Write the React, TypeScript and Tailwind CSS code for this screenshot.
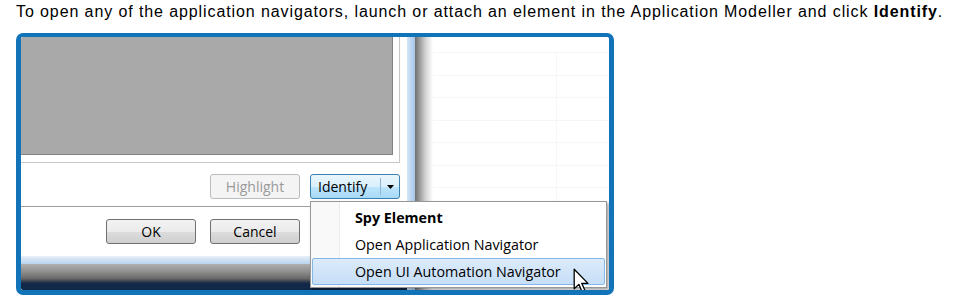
import React from "react";

const ui = { fontFamily: '"Open Sans", "Noto Sans", sans-serif' };

function Cursor() {
  return (
    <svg width="20" height="26" viewBox="0 0 14 20" className="absolute left-[551px] top-[231px] z-20">
      <path d="M1 1 L1 16 L4.6 12.6 L7.2 18.6 L9.4 17.6 L6.8 11.8 L11.6 11.8 Z" fill="#ffffff" stroke="#000000" strokeWidth="1" strokeLinejoin="round" />
    </svg>
  );
}

export default function App() {
  const rows = Array.from({ length: 11 });
  return (
    <div className="w-[956px] h-[295px] bg-white overflow-hidden">
      <p
        className="pl-[16px] pt-[3px] text-[16px] leading-[18px] tracking-[0.9px] text-black whitespace-nowrap"
        style={{ fontFamily: '"Liberation Sans", Arial, sans-serif' }}
      >
        To open any of the application navigators, launch or attach an element in the Application Modeller and click <b>Identify</b>.
      </p>
      <div className="ml-[16px] mt-[12px] w-[598px] h-[262px] border-[5px] border-t-[4px] border-[#1174b9] rounded-[7px] overflow-hidden">
        <div className="relative flex h-full w-full bg-white" style={ui}>
          {/* Dialog */}
          <div className="w-[386px] h-full flex flex-col bg-white">
            <div className="w-[379px] h-[126px] border-r border-b border-[#c6c6c6]">
              <div className="w-[372px] h-[118px] bg-[#a9a9a9] border-r border-b border-[#838383]" />
            </div>
            <div className="h-[43px] flex pl-[189px] pt-[11px] gap-[10px]">
              <div className="w-[90px] h-[25px] rounded-[3px] border border-[#b9bcbe] bg-[#f4f4f4] flex items-center justify-center text-[14px] text-[#9a9a9a]">
                Highlight
              </div>
              <div className="w-[90px] h-[25px] rounded-[3px] border border-[#3c7fb1] bg-[linear-gradient(#eaf6fd_0%,#d9f0fc_50%,#bee6fd_50%,#a7d9f5_100%)] flex items-center text-[14px] text-black">
                <span className="pl-[7px] w-[69px]">Identify</span>
                <span className="w-px h-[17px] bg-[#8fb3d0]" />
                <svg width="7" height="4" viewBox="0 0 7 4" className="ml-[6px]">
                  <path d="M0 0 L7 0 L3.5 4 Z" fill="#000" />
                </svg>
              </div>
            </div>
            <div className="h-px bg-[#a0a0a0]" />
            <div className="h-[49px] flex pl-[85px] pt-[12px] gap-[14px]">
              <div className="w-[90px] h-[25px] rounded-[3px] border border-[#707070] bg-[linear-gradient(#f2f2f2_0%,#ebebeb_50%,#dddddd_50%,#cfcfcf_100%)] flex items-center justify-center text-[14px] text-black">
                OK
              </div>
              <div className="w-[90px] h-[25px] rounded-[3px] border border-[#707070] bg-[linear-gradient(#f2f2f2_0%,#ebebeb_50%,#dddddd_50%,#cfcfcf_100%)] flex items-center justify-center text-[14px] text-black">
                Cancel
              </div>
            </div>
            <div className="h-[8px] bg-[linear-gradient(#dfeaf6,#b9d4ef)] border-t border-[#e8eef5]" />
            <div className="flex-1 bg-[linear-gradient(#b0b0b0_0%,#8e8e8e_30%,#6a6a6a_55%,#3c4350_66%,#15294a_74%,#0f2746_100%)]" />
          </div>
          {/* Aero frame strip + shadow */}
          <div className="w-[8px] h-full bg-[linear-gradient(90deg,#d6e6f6,#b7d2ef_60%,#a9c7e8)]" />
          <div className="w-[18px] h-full bg-[linear-gradient(90deg,#6e6e6e_0%,#9a9a9a_25%,#d5d5d5_60%,#ffffff_100%)]" />
          {/* Background grid */}
          <div className="flex-1 h-full flex flex-col pt-[15px]">
            {rows.map((_, i) => (
              <div key={i} className="h-[22.5px] shrink-0 border-t border-[#f6f6f6] flex">
                <div className="w-[124px] h-full border-r border-[#f7f7f7]" />
              </div>
            ))}
          </div>

          {/* Dropdown menu */}
          <div className="absolute left-[289px] top-[164px] w-[297px] h-[87px] z-10 bg-white border border-[#979797] shadow-[2px_2px_3px_rgba(0,0,0,0.35)] flex">
            <div className="absolute left-0 top-0 w-[29px] h-full bg-[#f9f9f9] border-r border-[#ececec]" />
            <div className="relative flex-1 flex flex-col pt-[2px] pl-[1px] pr-[1px]">
              <div className="h-[27px] flex items-center pl-[43px] text-[14.3px] font-bold text-black">
                Spy Element
              </div>
              <div className="h-[27px] flex items-center pl-[43px] text-[14.3px] text-black">
                Open Application Navigator
              </div>
              <div className="h-[27px] flex items-center pl-[42px] text-[14.3px] text-black rounded-[2px] border border-[#84b6e8] bg-[linear-gradient(#dcebfb,#c6def7)]">
                Open UI Automation Navigator
              </div>
            </div>
          </div>
          <Cursor />
        </div>
      </div>
    </div>
  );
}
